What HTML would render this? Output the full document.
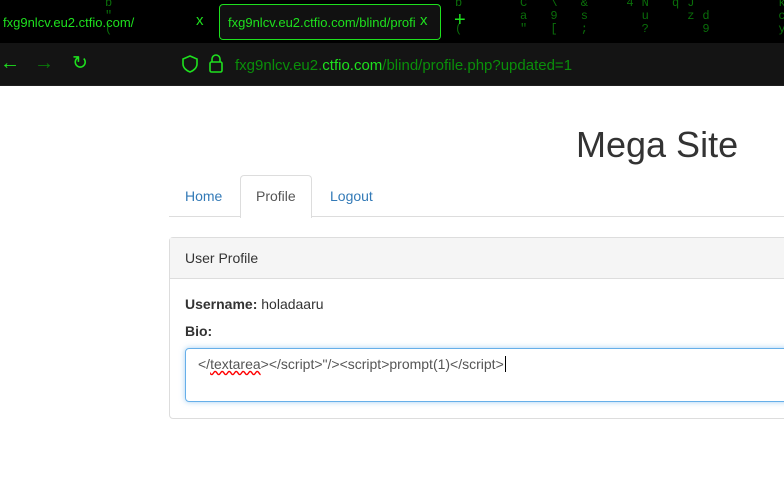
<!DOCTYPE html>
<html><head><meta charset="utf-8"><style>
body{margin:0;width:784px;height:500px;overflow:hidden;background:#fff;font-family:"Liberation Sans",sans-serif;position:relative}
.a{position:absolute}
.top{left:0;top:0;width:784px;height:43px;background:#000;overflow:hidden}
.m{position:absolute;color:#0a6e0a;font-family:"Liberation Mono",monospace;font-size:12px;line-height:13px;white-space:pre;letter-spacing:8px}
.bar{left:0;top:43px;width:784px;height:42px;background:#141414;border-bottom:1px solid #1f1f1f}
.g{color:#1ee01e}
</style></head><body>
<div class="a top">
<div class="m" style="left:105px;top:-3px">b</div>
<div class="m" style="left:105px;top:10px">"</div>
<div class="m" style="left:105px;top:23px">(</div>
<div class="m" style="left:520px;top:-3px">C \ &amp;  4N qJ     k #</div>
<div class="m" style="left:520px;top:10px">a 9 s   u  zd    c j >t</div>
<div class="m" style="left:520px;top:23px">" [ ;   ?   9    y y Uj</div>
<div class="m" style="left:455px;top:-3px">b</div>
<div class="m" style="left:455px;top:23px">(</div>
<div class="a g" style="left:3px;top:15px;font-size:13px">fxg9nlcv.eu2.ctfio.com/</div>
<div class="a g" style="left:196px;top:12px;font-size:15px">x</div>
<div class="a" style="left:219px;top:4px;width:220px;height:34px;border:1px solid #1ee01e;border-radius:4px;background:#111"></div>
<div class="a g" style="left:228px;top:15px;font-size:13px;width:188px;overflow:hidden;white-space:nowrap">fxg9nlcv.eu2.ctfio.com/blind/profile.</div>
<div class="a g" style="left:420px;top:12px;font-size:15px">x</div>
<div class="a g" style="left:454px;top:9px;font-size:20px">+</div>
</div>
<div class="a bar">
<div class="a g" style="left:0;top:9px;font-size:20px">←</div>
<div class="a" style="left:34px;top:9px;font-size:20px;color:#0a7a0a">→</div>
<div class="a g" style="left:72px;top:9px;font-size:19px">↻</div>
<svg class="a" style="left:182px;top:12px" width="16" height="18" viewBox="0 0 16 18"><path d="M8 1 L15 4 V9 C15 13 11 16 8 17 C5 16 1 13 1 9 V4 Z" fill="none" stroke="#1ee01e" stroke-width="1.6"/></svg>
<svg class="a" style="left:209px;top:11px" width="14" height="19" viewBox="0 0 14 19"><path d="M3 8 V5 A4 4 0 0 1 11 5 V8" fill="none" stroke="#1ee01e" stroke-width="1.6"/><rect x="1" y="8" width="12" height="10" rx="1.5" fill="none" stroke="#1ee01e" stroke-width="1.6"/></svg>
<div class="a" style="left:235px;top:14px;font-size:15px;color:#0a8f0a">fxg9nlcv.eu2.<span class="g">ctfio.com</span>/blind/profile.php?updated=1</div>
</div>
<div class="a" style="left:576px;top:124px;font-size:36px;color:#333">Mega Site</div>
<div class="a" style="left:169px;top:216px;width:615px;height:1px;background:#ddd"></div>
<div class="a" style="left:185px;top:188px;font-size:14px;color:#337ab7">Home</div>
<div class="a" style="left:240px;top:175px;width:70px;height:42px;border:1px solid #ddd;border-bottom:none;border-radius:4px 4px 0 0;background:#fff"></div>
<div class="a" style="left:256px;top:188px;font-size:14px;color:#555">Profile</div>
<div class="a" style="left:330px;top:188px;font-size:14px;color:#337ab7">Logout</div>
<div class="a" style="left:169px;top:237px;width:630px;height:180px;border:1px solid #ddd;border-radius:4px"></div>
<div class="a" style="left:170px;top:238px;width:620px;height:40px;background:#f5f5f5;border-bottom:1px solid #ddd"></div>
<div class="a" style="left:185px;top:250px;font-size:14px;color:#333">User Profile</div>
<div class="a" style="left:185px;top:296px;font-size:14px;color:#333"><b>Username:</b> holadaaru</div>
<div class="a" style="left:185px;top:323px;font-size:14px;color:#333"><b>Bio:</b></div>
<div class="a" style="left:185px;top:348px;width:610px;height:52px;border:1px solid #66afe9;border-radius:4px;box-shadow:0 0 6px rgba(102,175,233,.6)"></div>
<div class="a" style="left:198px;top:356px;font-size:14px;color:#555">&lt;/<span style="text-decoration:underline wavy red">textarea</span>&gt;&lt;/script&gt;"/&gt;&lt;script&gt;prompt(1)&lt;/script&gt;<span style="border-left:1px solid #000;margin-left:1px"></span></div>
</body></html>
